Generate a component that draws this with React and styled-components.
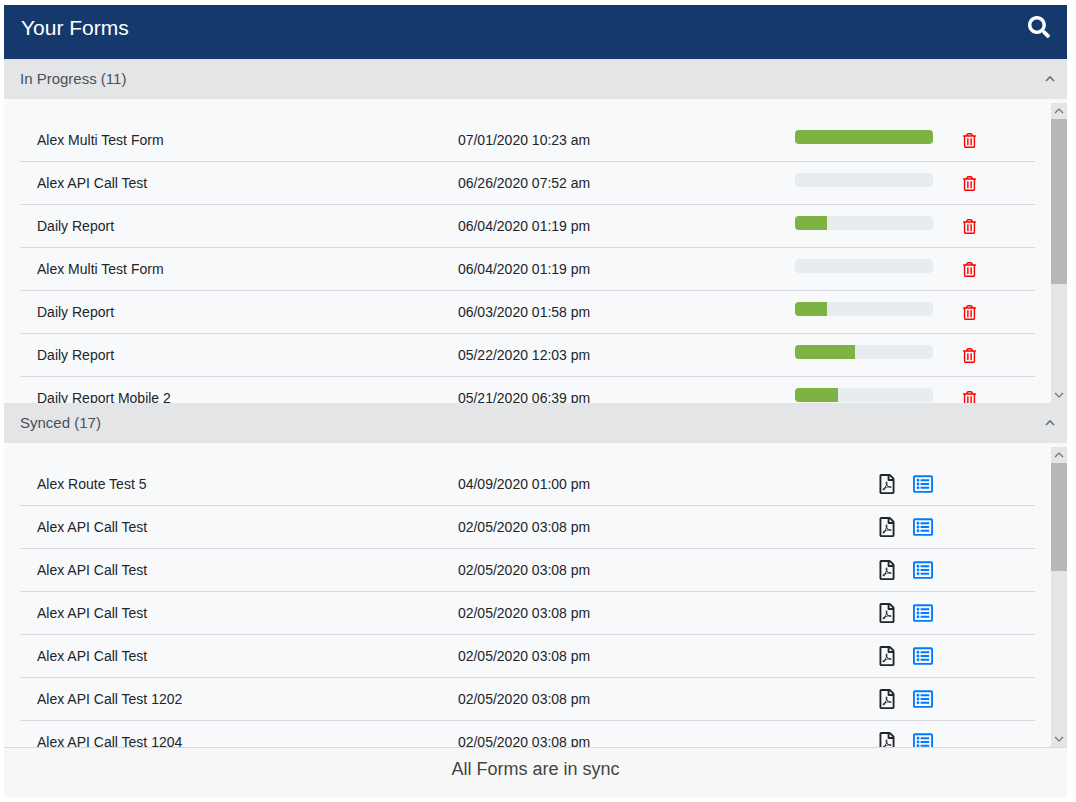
import React from 'react';
import styled, { createGlobalStyle } from 'styled-components';
import {
  FaRegFilePdf,
  FaRegListAlt,
  FaRegTrashAlt,
  FaSearch,
} from 'react-icons/fa';

const IN_PROGRESS = [
  { name: 'Alex Multi Test Form', date: '07/01/2020 10:23 am', progress: 100 },
  { name: 'Alex API Call Test', date: '06/26/2020 07:52 am', progress: 0 },
  { name: 'Daily Report', date: '06/04/2020 01:19 pm', progress: 23 },
  { name: 'Alex Multi Test Form', date: '06/04/2020 01:19 pm', progress: 0 },
  { name: 'Daily Report', date: '06/03/2020 01:58 pm', progress: 23 },
  { name: 'Daily Report', date: '05/22/2020 12:03 pm', progress: 43 },
  { name: 'Daily Report Mobile 2', date: '05/21/2020 06:39 pm', progress: 31 },
];

const SYNCED = [
  { name: 'Alex Route Test 5', date: '04/09/2020 01:00 pm' },
  { name: 'Alex API Call Test', date: '02/05/2020 03:08 pm' },
  { name: 'Alex API Call Test', date: '02/05/2020 03:08 pm' },
  { name: 'Alex API Call Test', date: '02/05/2020 03:08 pm' },
  { name: 'Alex API Call Test', date: '02/05/2020 03:08 pm' },
  { name: 'Alex API Call Test 1202', date: '02/05/2020 03:08 pm' },
  { name: 'Alex API Call Test 1204', date: '02/05/2020 03:08 pm' },
];

const GlobalStyle = createGlobalStyle`
  *, *::before, *::after {
    box-sizing: border-box;
  }

  body {
    margin: 0;
    background-color: #fff;
    color: #212529;
    font-family: "Liberation Sans", Arial, sans-serif;
    font-size: 14px;
    line-height: 20px;
  }
`;

const Page = styled.main`
  display: flex;
  flex-direction: column;
  height: calc(100vh - 10px);
  margin: 5px 9px 5px 4px;
  background-color: #f8f9fb;
`;

const Header = styled.header`
  display: flex;
  flex: none;
  align-items: flex-start;
  justify-content: space-between;
  height: 54px;
  padding: 11px 17px 0;
  color: #fff;
  background-color: #16396d;
`;

const Title = styled.h1`
  margin: 0;
  font-size: 21px;
  font-weight: 400;
  line-height: 24px;
`;

const IconButton = styled.button`
  display: flex;
  padding: 0;
  border: 0;
  color: ${({ $color }) => $color};
  font-size: ${({ $size }) => $size}px;
  background: none;
  cursor: pointer;
`;

const Actions = styled.div`
  display: flex;
  align-items: center;
  justify-content: ${({ $end }) => ($end ? 'flex-end' : 'flex-start')};
  gap: 16px;
`;

const Section = styled.section`
  display: flex;
  flex: 1;
  flex-direction: column;
  min-height: 0;
`;

const SectionHeading = styled.h2`
  flex: none;
  margin: 0;
`;

const SectionToggle = styled.button`
  display: flex;
  align-items: center;
  justify-content: space-between;
  width: 100%;
  height: 40px;
  padding: 0 11px 0 16px;
  border: 0;
  color: #495057;
  font: inherit;
  font-size: 15px;
  font-weight: 400;
  background-color: #e4e5e7;
  cursor: pointer;
`;

const Viewport = styled.div`
  display: flex;
  flex: 1;
  min-height: 0;
  margin-top: 4px;
`;

const Scroller = styled.div`
  flex: 1;
  padding: 16px 16px 0;
  overflow: hidden;
`;

const Scrollbar = styled.div`
  display: flex;
  flex: none;
  flex-direction: column;
  width: 16px;
  background-color: #e5e5e5;
`;

const ScrollButton = styled.button`
  display: flex;
  flex: none;
  align-items: center;
  justify-content: center;
  height: 16px;
  padding: 0;
  border: 0;
  color: #707070;
  background: none;
`;

const ScrollTrack = styled.div`
  flex: 1;
`;

const ScrollThumb = styled.div`
  background-color: #b8b8b8;
`;

const Table = styled.table`
  width: 100%;
  table-layout: fixed;
  border-spacing: 0;
`;

const Column = styled.col`
  width: ${({ $share }) => ($share * 100) / 12}%;
`;

const Cell = styled.td`
  height: 43px;
  padding: 0 15px;
  border-bottom: 1px solid #d8dadd;
  white-space: nowrap;
`;

const NameCell = styled(Cell)`
  padding-left: 17px;
`;

const StatusCell = styled(Cell)`
  padding: 0 17px 0 14px;
`;

const DeleteCell = styled(Cell)`
  padding: 0 12px;
`;

const Progress = styled.div`
  height: 14px;
  margin-bottom: 6px;
  border-radius: 4px;
  overflow: hidden;
  background-color: #e9ecef;
`;

const ProgressFill = styled.div`
  height: 100%;
  background-color: #7cb342;
`;

const Footer = styled.footer`
  flex: none;
  height: 50px;
  padding-top: 9px;
  border-top: 1px solid #d8dadd;
  color: #444;
  font-size: 18px;
  line-height: 24px;
  text-align: center;
  background-color: #f7f7f7;
`;

const Chevron = ({ down, bold }) => (
  <svg width="12" height="8" viewBox="0 0 12 8" fill="none" aria-hidden="true">
    <path
      d={down ? 'M2 2l4 4 4-4' : 'M2 6l4-4 4 4'}
      stroke={bold ? '#6b7075' : 'currentColor'}
      strokeWidth={bold ? 1.6 : 1.2}
    />
  </svg>
);

const FormsSection = ({ title, visible, children }) => (
  <Section>
    <SectionHeading>
      <SectionToggle type="button" aria-expanded="true">
        {title}
        <Chevron bold />
      </SectionToggle>
    </SectionHeading>
    <Viewport>
      <Scroller>
        <Table>
          <colgroup>
            <Column $share={5} />
            <Column $share={4} />
            <Column $share={2} />
            <Column $share={1} />
          </colgroup>
          <tbody>{children}</tbody>
        </Table>
      </Scroller>
      <Scrollbar>
        <ScrollButton type="button" aria-label="Scroll up">
          <Chevron />
        </ScrollButton>
        <ScrollTrack>
          <ScrollThumb style={{ height: `${visible}%` }} />
        </ScrollTrack>
        <ScrollButton type="button" aria-label="Scroll down">
          <Chevron down />
        </ScrollButton>
      </Scrollbar>
    </Viewport>
  </Section>
);

const App = () => (
  <>
    <GlobalStyle />
    <Page>
      <Header>
        <Title>Your Forms</Title>
        <IconButton type="button" $color="#fff" $size={22} aria-label="Search">
          <FaSearch />
        </IconButton>
      </Header>

      <FormsSection title="In Progress (11)" visible={61.5}>
        {IN_PROGRESS.map(({ name, date, progress }) => (
          <tr key={name + date}>
            <NameCell>{name}</NameCell>
            <Cell>{date}</Cell>
            <StatusCell>
              <Progress>
                <ProgressFill style={{ width: `${progress}%` }} />
              </Progress>
            </StatusCell>
            <DeleteCell>
              <Actions>
                <IconButton
                  type="button"
                  $color="#f00"
                  $size={15}
                  aria-label="Delete"
                >
                  <FaRegTrashAlt />
                </IconButton>
              </Actions>
            </DeleteCell>
          </tr>
        ))}
      </FormsSection>

      <FormsSection title="Synced (17)" visible={40.3}>
        {SYNCED.map(({ name, date }, index) => (
          <tr key={index}>
            <NameCell>{name}</NameCell>
            <Cell>{date}</Cell>
            <StatusCell>
              <Actions $end>
                <IconButton
                  type="button"
                  $color="#212529"
                  $size={20}
                  aria-label="Open PDF"
                >
                  <FaRegFilePdf />
                </IconButton>
                <IconButton
                  type="button"
                  $color="#007bff"
                  $size={20}
                  aria-label="View details"
                >
                  <FaRegListAlt />
                </IconButton>
              </Actions>
            </StatusCell>
            <Cell />
          </tr>
        ))}
      </FormsSection>

      <Footer>All Forms are in sync</Footer>
    </Page>
  </>
);

export default App;
